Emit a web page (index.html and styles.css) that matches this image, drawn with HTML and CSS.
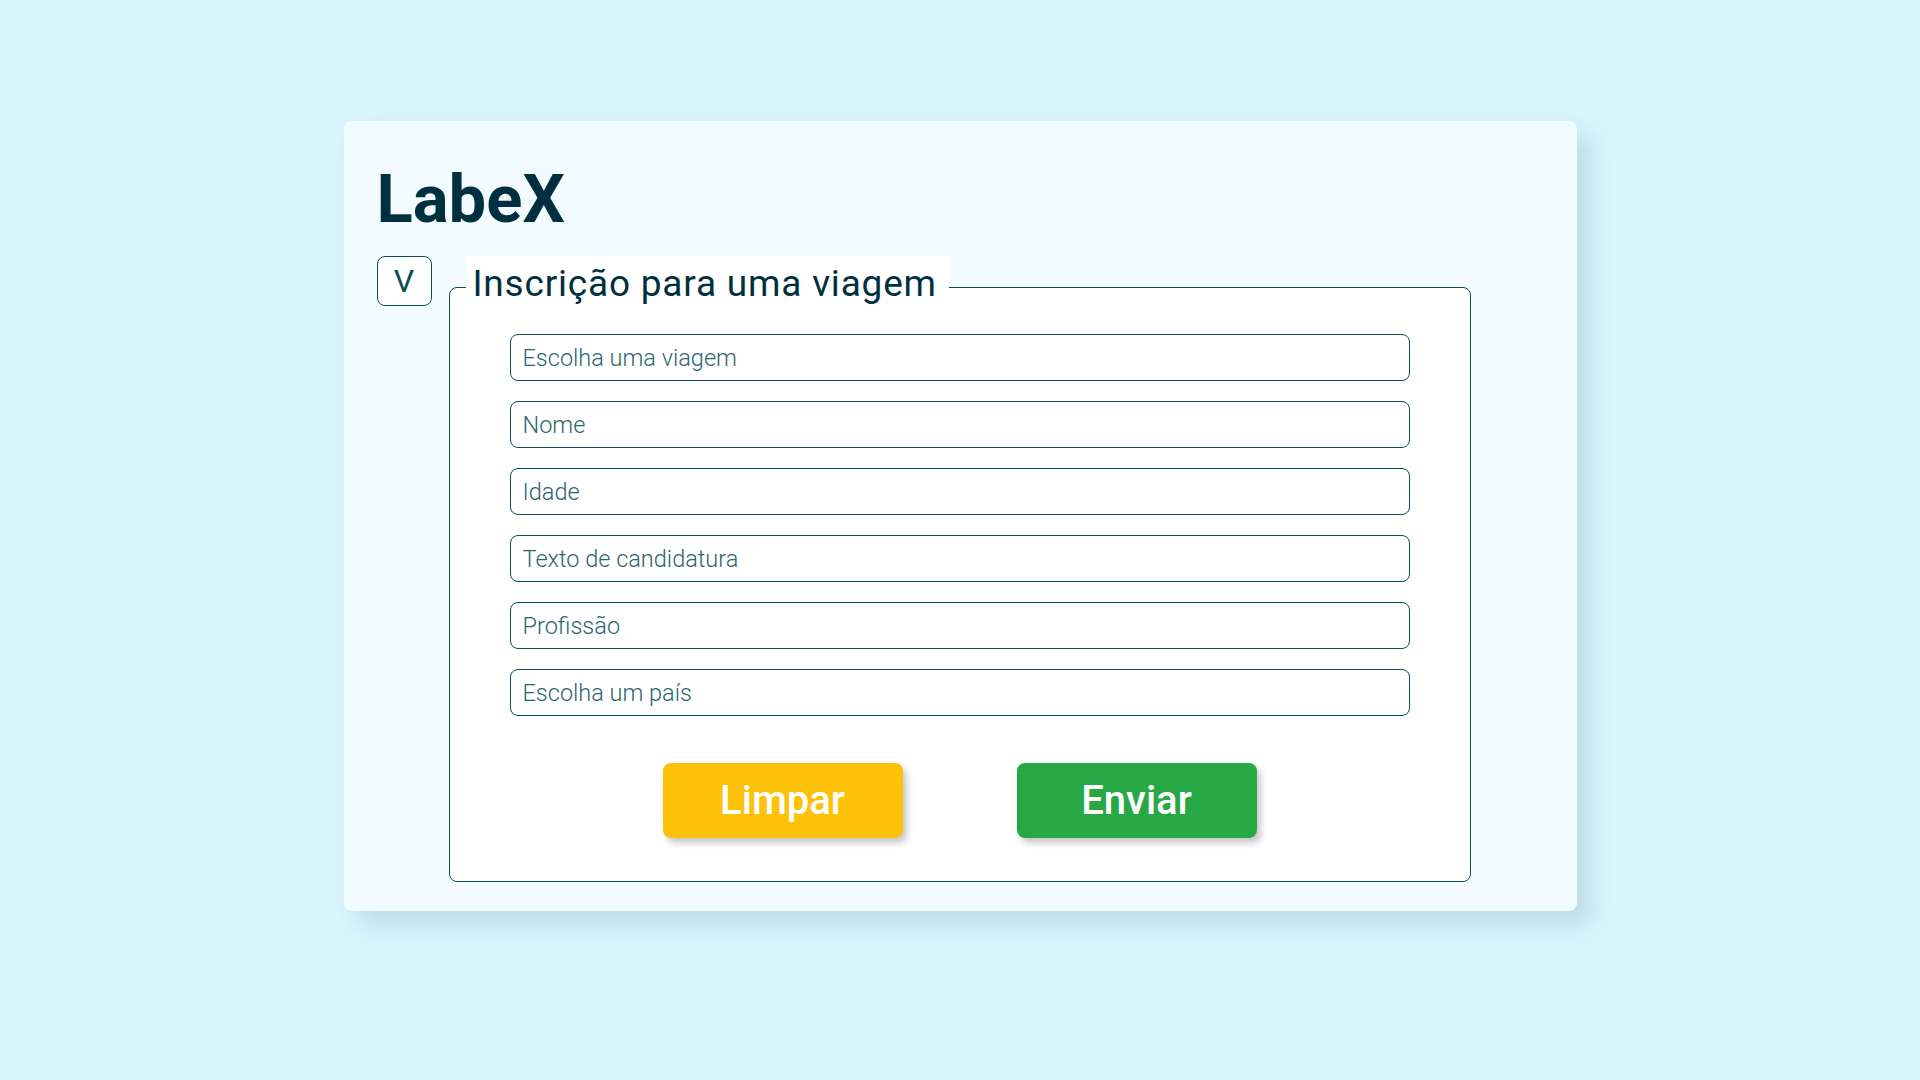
FILE: index.html
```html
<!DOCTYPE html>
<html lang="pt-BR">
<head>
<meta charset="utf-8">
<title>LabeX</title>
<link rel="stylesheet" href="styles.css">
</head>
<body>
<main class="card">
  <h1 class="brand">LabeX</h1>
  <div class="row">
    <button class="back" type="button">V</button>
    <fieldset class="form-box">
      <legend class="form-title">Inscrição para uma viagem</legend>
      <div class="fields">
        <input class="field" type="text" placeholder="Escolha uma viagem">
        <input class="field" type="text" placeholder="Nome">
        <input class="field" type="text" placeholder="Idade">
        <input class="field" type="text" placeholder="Texto de candidatura">
        <input class="field" type="text" placeholder="Profissão">
        <input class="field" type="text" placeholder="Escolha um país">
      </div>
      <div class="actions">
        <button class="btn btn-clear" type="button">Limpar</button>
        <button class="btn btn-send" type="button">Enviar</button>
      </div>
    </fieldset>
  </div>
</main>
</body>
</html>
```
FILE: styles.css
```css
* { box-sizing: border-box; }

html, body {
  margin: 0;
  padding: 0;
}

body {
  background: #d8f5fe;
  font-family: Roboto, "Liberation Sans", sans-serif;
  min-height: 1080px;
  padding-top: 121px;
}

.card {
  width: 1233px;
  margin: 0 auto;
  background: #f2fbff;
  border-radius: 8px;
  padding: 45px 0 29px 33px;
  box-shadow: 14px 14px 22px rgba(40, 90, 110, 0.15);
}

.brand {
  margin: 0;
  font-size: 67px;
  line-height: 66px;
  font-weight: 700;
  color: #00303f;
}

.row {
  display: flex;
  align-items: flex-start;
  gap: 17px;
  margin-top: 24px;
}

.back {
  width: 55px;
  height: 50px;
  border: 1px solid #0b4d52;
  border-radius: 8px;
  background: #ffffff;
  color: #0b4d52;
  font-family: Roboto, "Liberation Sans", sans-serif;
  font-size: 32px;
  line-height: 1;
  padding: 0;
  display: flex;
  align-items: center;
  justify-content: center;
}

.form-box {
  width: 1022px;
  margin: 0;
  background: #ffffff;
  border: 1px solid #0b4d52;
  border-radius: 8px;
  padding: 16px 16px 43px;
  min-width: 0;
}

.form-title {
  background: #ffffff;
  color: #00303f;
  font-size: 37px;
  line-height: 43px;
  letter-spacing: 0.8px;
  font-weight: 400;
  padding: 6px 12px 13px 7px;
  margin-left: 0;
}

.fields {
  width: 900px;
  margin: 0 auto;
  display: flex;
  flex-direction: column;
  gap: 20px;
}

.field {
  display: block;
  width: 100%;
  height: 47px;
  border: 1px solid #0b4d52;
  border-radius: 8px;
  background: #ffffff;
  padding: 1px 12px 0;
  font-family: Roboto, "Liberation Sans", sans-serif;
  font-size: 23.5px;
  font-weight: 300;
  color: #2c666d;
  outline: none;
}

.field::placeholder {
  color: #2c666d;
  opacity: 1;
}

.actions {
  display: flex;
  justify-content: center;
  gap: 114px;
  margin-top: 47px;
}

.btn {
  width: 240px;
  height: 75px;
  border: none;
  border-radius: 8px;
  color: #ffffff;
  font-family: Roboto, "Liberation Sans", sans-serif;
  font-size: 40px;
  font-weight: 500;
  padding: 0;
  box-shadow: 4px 5px 7px rgba(0, 0, 0, 0.22);
}

.btn-clear { background: #fdc107; }
.btn-send { background: #28a745; }
```
